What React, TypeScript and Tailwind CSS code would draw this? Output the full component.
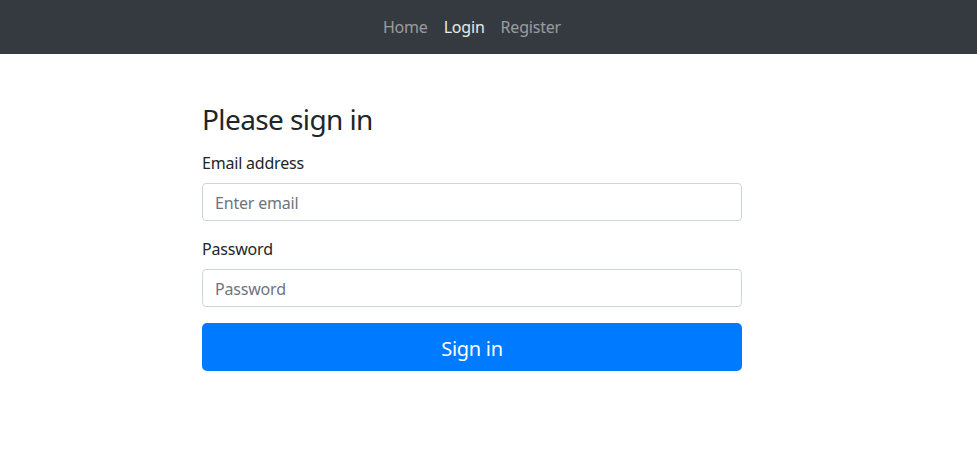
export default function App() {
  return (
    <div className="min-h-screen bg-white font-['Segoe_UI','Noto_Sans',sans-serif] text-[#212529]">
      {/* Navbar */}
      <nav className="h-[54px] bg-[#343a40] flex items-center justify-center pr-[33px]">
        <ul className="flex text-base leading-6 tracking-[-0.2px]">
          <li>
            <a href="#" className="block px-2 py-2 text-white/50">Home</a>
          </li>
          <li>
            <a href="#" className="block px-2 py-2 text-white/90">Login</a>
          </li>
          <li>
            <a href="#" className="block px-2 py-2 text-white/50">Register</a>
          </li>
        </ul>
      </nav>

      {/* Form */}
      <div className="flex justify-center pr-[33px] pt-[49px]">
        <form className="w-[540px]" onSubmit={(e) => e.preventDefault()}>
          <h3 className="text-[28px] leading-[1.2] font-normal mb-[14px] tracking-[-0.6px]">Please sign in</h3>

          <div className="mb-4">
            <label className="block text-base leading-6 mb-2 tracking-[-0.2px]">Email address</label>
            <input
              type="email"
              placeholder="Enter email"
              className="block w-full h-[38px] px-3 pt-[7px] pb-[5px] text-base tracking-[-0.2px] border border-[#ced4da] rounded-[4px] placeholder:text-[#6c757d] outline-none"
            />
          </div>

          <div className="mb-4">
            <label className="block text-base leading-6 mb-2 tracking-[-0.2px]">Password</label>
            <input
              type="password"
              placeholder="Password"
              className="block w-full h-[38px] px-3 pt-[7px] pb-[5px] text-base tracking-[-0.2px] border border-[#ced4da] rounded-[4px] placeholder:text-[#6c757d] outline-none"
            />
          </div>

          <button
            type="submit"
            className="block w-full h-[48px] pt-1 bg-[#007bff] text-white text-xl tracking-[-0.3px] rounded-[5px]"
          >
            Sign in
          </button>
        </form>
      </div>
    </div>
  );
}
